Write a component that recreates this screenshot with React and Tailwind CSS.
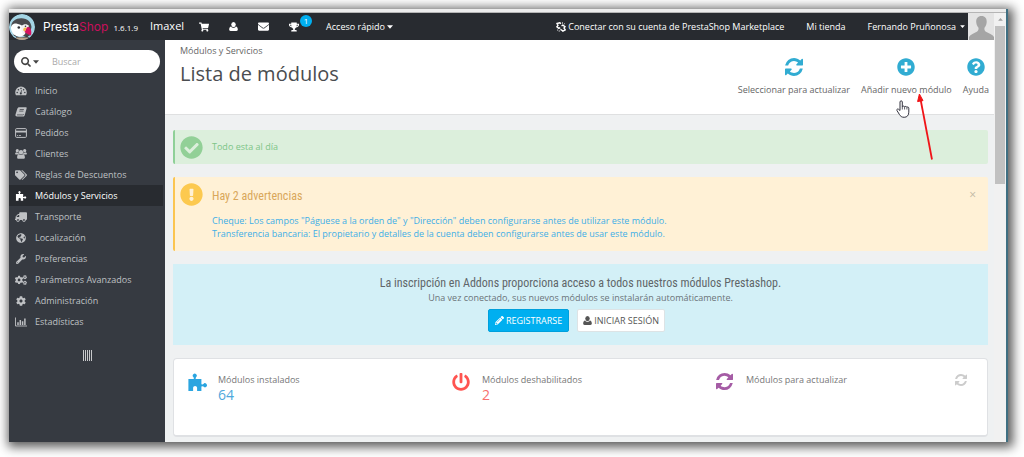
import {
  FaShoppingCart,
  FaEnvelope,
  FaTrophy,
  FaTags,
  FaTruck,
  FaWrench,
  FaCog,
  FaCogs,
  FaPencilAlt,
  FaPlusCircle,
  FaQuestionCircle,
  FaPowerOff,
  FaSearch,
  FaGlobeAmericas,
  FaExclamationCircle,
  FaCheckCircle,
} from "react-icons/fa";

function RefreshIcon({ className }) {
  return (
    <svg viewBox="0 128 1536 1536" fill="currentColor" className={className} aria-hidden="true">
      <path d="M1511 1056q0 5-1 7-64 268-268 434.500t-478 166.500q-146 0-282.500-55t-243.500-157l-129 129q-19 19-45 19t-45-19-19-45v-448q0-26 19-45t45-19h448q26 0 45 19t19 45-19 45l-137 137q71 66 161 102t187 36q134 0 250-65t186-179q11-17 53-117 8-23 30-23h192q13 0 22.500 9.500t9.500 22.500zm25-800v448q0 26-19 45t-45 19h-448q-26 0-45-19t-19-45 19-45l138-138q-148-137-349-137-134 0-250 65t-186 179q-11 17-53 117-8 23-30 23h-199q-13 0-22.500-9.500t-9.500-22.500v-7q65-268 270-434.500t480-166.500q146 0 284 55.500t245 156.500l130-129q19-19 45-19t45 19 19 45z" />
    </svg>
  );
}

function PuzzleIcon({ className }) {
  return (
    <svg viewBox="0 0 19 18" fill="currentColor" className={className} aria-hidden="true">
      <path d="M.4 5.600h4.800c.6 0 .7-.5.600-1L5.400 3.600a2 2 0 1 1 2.700 0l-.4 1c-.1.500 0 1 .6 1h5.100v4.700c0 .6.400.8 1 .6l1-.5a2 2 0 1 1 0 2.700l-1-.4c-.6-.2-1 0-1 .6v4.200H9.100v-3.200c0-1.100-.9-1.900-2-1.900s-2 .8-2 1.900v3.200H.4z" />
    </svg>
  );
}

function CaretIcon({ className }) {
  return (
    <svg viewBox="0 0 8 5" fill="currentColor" className={className} aria-hidden="true">
      <path d="M0 .3h8L4 4.900z" />
    </svg>
  );
}

function UserIcon({ className }) {
  return (
    <svg viewBox="0 0 10 10" fill="currentColor" className={className} aria-hidden="true">
      <ellipse cx="5" cy="2.900" rx="2.500" ry="2.900" />
      <path d="M2.400 5c.7 1.100 1.500 1.600 2.600 1.600S6.900 6.100 7.600 5c1.500.2 2.200 1.600 2.200 3.400 0 1.100-.6 1.600-1.500 1.600H1.700C.8 10 .2 9.500.2 8.400.2 6.600.9 5.200 2.400 5z" />
    </svg>
  );
}

function GaugeIcon({ className }) {
  return (
    <svg viewBox="0 0 12 10" className={className} aria-hidden="true">
      <path d="M6 .6A5.800 5.800 0 0 0 .2 6.400c0 1.100.3 2.100.8 2.900h10c.5-.8.8-1.800.8-2.900A5.800 5.800 0 0 0 6 .6z" fill="currentColor" />
      <g fill="#363a41">
        <circle cx="2.200" cy="6.400" r=".75" />
        <circle cx="3.400" cy="3.700" r=".75" />
        <circle cx="6" cy="2.500" r=".75" />
        <circle cx="8.600" cy="3.700" r=".75" />
        <circle cx="9.800" cy="6.400" r=".75" />
        <circle cx="5.800" cy="7.400" r="1" />
        <path d="m5.500 7 .8-3 .5.100-.5 3.100z" />
      </g>
    </svg>
  );
}

function BookIcon({ className }) {
  return (
    <svg viewBox="0 0 12 10" className={className} aria-hidden="true">
      <path d="M4.200.3h6.600c.7 0 1 .5.800 1.200L9.700 8.300c-.2.800-.8 1.300-1.600 1.300H2C.8 9.600.2 8.700.5 7.600L2.300 1.800C2.600.9 3.300.3 4.200.3z" fill="currentColor" />
      <path d="M4.700 2.500h4.200M4.200 4.100h4.200M2 7.900h5.800c.5 0 .8-.3 1-.8" stroke="#363a41" strokeWidth=".7" fill="none" />
    </svg>
  );
}

function GroupIcon({ className }) {
  return (
    <svg viewBox="0 0 12 10" fill="currentColor" className={className} aria-hidden="true">
      <circle cx="2.300" cy="1.700" r="1.600" />
      <circle cx="9.700" cy="1.700" r="1.600" />
      <circle cx="6" cy="3.300" r="2.200" />
      <path d="M1 3.300c.8.500 1.700.6 2.500.2.100 1 .4 1.500.8 2H1.200C.4 5.500 0 5.100.1 4.400zM11 3.300c-.8.500-1.700.6-2.500.2-.1 1-.4 1.500-.8 2h3.100c.8 0 1.200-.4 1.100-1.100z" />
      <path d="M4 5.200c1.300 1 2.700 1 4 0 1.400.2 1.900 1.500 1.900 3 0 1-.6 1.600-1.500 1.600H3.600c-.9 0-1.500-.6-1.500-1.600 0-1.500.5-2.800 1.900-3z" />
    </svg>
  );
}

function TruckIcon({ className }) {
  return <FaTruck className={`${className} -scale-x-100`} />;
}

function CardIcon({ className }) {
  return (
    <svg viewBox="0 0 12 10" fill="none" stroke="currentColor" className={className} aria-hidden="true">
      <rect x=".6" y=".6" width="10.800" height="8.800" rx="1" strokeWidth="1" />
      <path d="M.6 3.600h10.800" strokeWidth="1.800" />
      <path d="M2 7.500h1.200M4 7.500h2" strokeWidth=".8" />
    </svg>
  );
}

function ChartIcon({ className }) {
  return (
    <svg viewBox="0 0 12 10" fill="none" stroke="currentColor" className={className} aria-hidden="true">
      <path d="M.5 .5v8.500H12" strokeWidth=".9" />
      <path d="M3 8V5.300M5.300 8V3M7.600 8V4.300M9.900 8V1.500" strokeWidth="1.500" />
    </svg>
  );
}

function UnlinkedIcon({ className }) {
  return (
    <svg viewBox="0 0 10 10" fill="none" stroke="currentColor" strokeWidth="1.400" className={className} aria-hidden="true">
      <path d="M5 1.600 3.800.8 1 1.500l1 2 -1.200 1.300 2 1.600 1.400-.8M5.500 4l1.300-.9 2.200 1.500-1 1.400 1.300 1.900-2.400 1.200L5.600 8l-1.200-.6" />
      <path d="M6.500.3v1.400M8.800 1.500l-1 .9M1 8.500l1-.9M3.200 9.700V8.300" strokeWidth=".8" />
    </svg>
  );
}

function PuffinLogo({ className }) {
  return (
    <svg viewBox="0 0 26 26" className={className} aria-hidden="true">
      <defs>
        <clipPath id="puffin-disc">
          <circle cx="13" cy="13" r="13" />
        </clipPath>
      </defs>
      <g clipPath="url(#puffin-disc)">
        <circle cx="13" cy="13" r="13" fill="#a4d5e5" />
        <path d="M2 12.500C2.500 7 7 4 12.500 4.200c6 .2 9.500 3.800 10 8.700L20.500 22H5z" fill="#4a4a4e" />
        <path d="M2 14.500c-.2-3.500 2.600-5.300 6-4.800 2.600.3 4.500 1.700 6 2.300l2.500 6c0 2.500-2.500 4.500-6 4.500-4.500 0-8-3-8.500-8z" fill="#fff" />
        <path d="M12.500 12c2-2.200 5.500-2.500 7.500-.2l-2.500 5.700-3 3c-1.500-2-3-5-2-8.500z" fill="#f3f3f3" />
        <path d="M17 15c1-2.500 3.500-2.700 4.700.3.800 2 .8 4 .3 6.200-2.300-.8-5-2.300-6.500-3.500z" fill="#d6145f" />
        <path d="M14.500 14.500c1-1.200 2.200-1.300 3.200-.7l-1.700 3.700-1.800-1z" fill="#f6b64a" />
        <circle cx="9.800" cy="13.500" r="1.300" fill="#2f3035" />
        <circle cx="16.500" cy="12.300" r=".8" fill="#2f3035" />
        <path d="M6 21.500c4 2.500 8 2.500 12-.3l2 2.300-3 2H8z" fill="#3a3b40" />
        <path d="M7 23.500h12l-1 2.500H8z" fill="#b8a48c" />
      </g>
    </svg>
  );
}

const menu = [
  { label: "Inicio", Icon: GaugeIcon },
  { label: "Catálogo", Icon: BookIcon },
  { label: "Pedidos", Icon: CardIcon },
  { label: "Clientes", Icon: GroupIcon },
  { label: "Reglas de Descuentos", Icon: FaTags },
  { label: "Módulos y Servicios", Icon: PuzzleIcon, active: true },
  { label: "Transporte", Icon: TruckIcon },
  { label: "Localización", Icon: FaGlobeAmericas },
  { label: "Preferencias", Icon: FaWrench },
  { label: "Parámetros Avanzados", Icon: FaCogs },
  { label: "Administración", Icon: FaCog },
  { label: "Estadísticas", Icon: ChartIcon },
];

function TopBar() {
  return (
    <header className="flex h-[27px] items-center bg-[#282b30] text-[9px] text-white">
      <PuffinLogo className="size-[26px] shrink-0" />
      <a href="#inicio" className="ml-2 font-[Inter,sans-serif] text-[12px]">
        Presta<span className="text-[#c8105c]">Shop</span>
      </a>
      <span className="ml-[5px] pt-[2px] text-[8px] font-medium">1.6.1.9</span>
      <a href="#imaxel" className="ml-3 text-[11px]">Imaxel</a>
      <nav className="ml-[15px] flex items-center gap-5">
        <a href="#pedidos" aria-label="Pedidos"><FaShoppingCart className="size-[10px]" /></a>
        <a href="#clientes" aria-label="Clientes"><UserIcon className="size-[9px]" /></a>
        <a href="#mensajes" aria-label="Mensajes"><FaEnvelope className="size-[11px]" /></a>
        <a href="#logros" aria-label="Logros" className="relative">
          <FaTrophy className="size-[10px]" />
          <span className="absolute -top-[7px] left-[11px] flex size-3 items-center justify-center rounded-full bg-[#00aff0] text-[8px]">1</span>
        </a>
      </nav>
      <button type="button" className="ml-[27px] flex items-center gap-[2px]">
        Acceso rápido <CaretIcon className="h-1 w-[6px]" />
      </button>
      <div className="ml-auto flex items-center">
        <a href="#marketplace" className="flex items-center gap-[2px]">
          <UnlinkedIcon className="size-[10px]" /> Conectar con su cuenta de PrestaShop Marketplace
        </a>
        <a href="#tienda" className="ml-[22px]">Mi tienda</a>
        <button type="button" className="ml-[22px] flex items-center gap-1">
          Fernando Pruñonosa <CaretIcon className="h-[3px] w-[5px]" />
        </button>
      </div>
      <svg viewBox="0 0 26 27" className="ml-[3px] h-[27px] w-[26px] bg-[#e4e4e4]" aria-hidden="true">
        <path d="M13.500 3c3.600 0 5.400 2.500 5.200 6-.2 3-1.200 4.600-2.200 5.800-.3 1.700 0 3.200 1.400 4 3.500 1.800 7.100 3 8.100 5.200v3H1v-3c1-2.200 4.500-3.400 7.800-5.200 1.400-.8 2-2.300 1.700-4-1-1.200-2.100-2.800-2.300-5.800-.2-3.500 1.700-6 5.300-6z" fill="#a5a5a5" />
      </svg>
    </header>
  );
}

function Sidebar() {
  return (
    <aside className="w-[156px] shrink-0 bg-[#363a41] pt-[10px]">
      <form className="mx-[5px] flex h-[23px] items-center rounded-full bg-white pl-[7px] text-[#444]">
        <button type="button" aria-label="Tipo de búsqueda" className="flex items-center gap-[2px]">
          <FaSearch className="size-[10px]" />
          <CaretIcon className="h-1 w-[6px]" />
        </button>
        <input aria-label="Buscar" placeholder="Buscar" className="ml-[13px] w-full min-w-0 bg-transparent text-[9px] outline-none placeholder:text-[#aaa]" />
      </form>
      <ul className="mt-[7px]">
        {menu.map(({ label, Icon, active }) => (
          <li key={label}>
            <a
              href="#menu"
              className={
                active
                  ? "mr-[2px] flex h-[21px] items-center bg-[#282b30] pl-[5px] text-[9px] font-medium text-white"
                  : "flex h-[21px] items-center pl-[5px] text-[9px] text-[#bfc1c4]"
              }
            >
              <span className="flex w-[13px] justify-center">
                <Icon className="h-[10px] w-3" />
              </span>
              <span className="ml-2">{label}</span>
            </a>
          </li>
        ))}
      </ul>
      <button type="button" aria-label="Contraer menú" className="mx-auto mt-[18px] flex gap-px">
        {[0, 1, 2, 3, 4].map((n) => (
          <span key={n} className="h-[11px] w-px bg-[#c8c9cb]" />
        ))}
      </button>
    </aside>
  );
}

function PageHeader() {
  return (
    <div className="relative flex h-[75px] justify-between border-b border-[#dfe0e1] bg-white pr-[5px] pl-[15px]">
      <div className="pt-1 text-[9px] text-[#666]">
        <p>Módulos y Servicios</p>
        <h1 className="mt-[3px] text-[20px] leading-[26px] text-[#4a4d50]">Lista de módulos</h1>
      </div>
      <div className="flex items-start gap-[11px] pt-[18px] text-[9px] text-[#666]">
        <button type="button" className="flex flex-col items-center gap-[7px]">
          <RefreshIcon className="size-[18px] text-[#31acd2]" />
          Seleccionar para actualizar
        </button>
        <button type="button" className="flex flex-col items-center gap-[7px]">
          <FaPlusCircle className="size-[18px] text-[#31acd2]" />
          Añadir nuevo módulo
        </button>
        <button type="button" className="flex flex-col items-center gap-[7px]">
          <FaQuestionCircle className="size-[18px] text-[#31acd2]" />
          Ayuda
        </button>
      </div>
      <svg viewBox="0 0 14 18" className="absolute top-[60px] right-[84px] h-[18px] w-[14px]" aria-hidden="true">
        <path d="M4 10.500V2c0-1.600 2.300-1.600 2.300 0v4.800c.2-1 2.100-1 2.300.2.300-.9 2.100-.8 2.300.4.300-.7 1.900-.6 1.900.8v4c0 3-1.700 5.100-4.600 5.100-2.500 0-3.700-1-4.900-3L1 10.600c-.8-1.300.9-2.200 1.800-1.100z" fill="#fff" stroke="#33333f" strokeWidth="1" strokeLinejoin="round" />
        <path d="M6.300 6.500v3M8.600 7v2.500M10.900 7.400v2.100" fill="none" stroke="#33333f" strokeWidth=".8" />
      </svg>
      <svg viewBox="0 0 18 68" className="absolute top-[54px] right-[59px] h-[68px] w-[18px]" aria-hidden="true">
        <path d="M15 65.500 3.500 5" fill="none" stroke="#f01418" strokeWidth="1.800" />
        <path d="M2.400 0 6 6.600.6 7.600z" fill="#f01418" stroke="#f01418" />
      </svg>
    </div>
  );
}

const stats = [
  { label: "Módulos instalados", value: "64", Icon: PuzzleIcon, icon: "size-[19px] text-[#2ba5e0]", number: "text-[#4fa8dc]" },
  { label: "Módulos deshabilitados", value: "2", Icon: FaPowerOff, icon: "size-[18px] text-[#ff5450]", number: "text-[#f8706c]" },
  { label: "Módulos para actualizar", value: "", Icon: RefreshIcon, icon: "size-[17px] text-[#a55ca5]", number: "" },
];

const condensed = "font-['Ubuntu_Condensed','Roboto_Condensed','Liberation_Sans_Narrow',sans-serif]";

function Content() {
  return (
    <main className="flex min-w-0 flex-1 flex-col bg-[#eff1f2]">
      <PageHeader />
      <div className="flex flex-col gap-[13px] pt-[15px] pr-[6px] pb-[5px] pl-2 text-[9px]">
        <div className="flex h-[34px] items-center gap-[9px] rounded-[2px] border-l-2 border-[#8fd098] bg-[#dcefdc] pl-[5px] text-[#7cc587]">
          <FaCheckCircle className="size-[23px] text-[#92d097]" />
          Todo esta al día
        </div>

        <div className="flex h-[74px] items-start rounded-[2px] border-l-2 border-[#fbc550] bg-[#fff1d6] pt-[6px] pr-3 pl-[5px]">
          <FaExclamationCircle className="size-[23px] shrink-0 text-[#fcc94f]" />
          <div className="ml-[9px] flex-1">
            <h2 className={`${condensed} pt-[4px] text-[12px] leading-[18px] text-[#d9a75a]`}>Hay 2 advertencias</h2>
            <p className="mt-[9px] leading-[13px] text-[#40aee6]">
              <a href="#cheque" className="block">Cheque: Los campos "Páguese a la orden de" y "Dirección" deben configurarse antes de utilizar este módulo.</a>
              <a href="#transferencia" className="block">Transferencia bancaria: El propietario y detalles de la cuenta deben configurarse antes de usar este módulo.</a>
            </p>
          </div>
          <button type="button" aria-label="Cerrar" className="pt-[5px] text-[12px] leading-[14px] text-[#c2b8a4]">×</button>
        </div>

        <section className="flex h-[81px] flex-col items-center bg-[#d3f0f7] pt-[11px] text-[#6b7377]">
          <h2 className={`${condensed} text-[12px] leading-[17px] text-[#5f6669]`}>
            La inscripción en Addons proporciona acceso a todos nuestros módulos Prestashop.
          </h2>
          <p className="leading-[11px]">Una vez conectado, sus nuevos módulos se instalarán automáticamente.</p>
          <div className="mt-[6px] flex gap-2 pr-2">
            <button type="button" className="flex h-[23px] items-center gap-[2px] rounded-[2px] border border-[#00a0dc] bg-[#00aff0] px-[6px] text-white">
              <FaPencilAlt className="size-[9px]" /> REGISTRARSE
            </button>
            <button type="button" className="flex h-[23px] items-center gap-[2px] rounded-[2px] border border-[#dde3e5] bg-white px-[5px] text-[#555]">
              <UserIcon className="size-[9px]" /> INICIAR SESIÓN
            </button>
          </div>
        </section>

        <section className="relative grid h-[79px] grid-cols-3 rounded-[4px] border border-b-2 border-[#dfe1e4] bg-white pt-[14px] pr-[7px] pl-[14px]">
          {stats.map(({ label, value, Icon, icon, number }) => (
            <div key={label} className="flex items-start">
              <span className="flex w-[30px]">
                <Icon className={icon} />
              </span>
              <div className="text-[#777]">
                <p className="leading-[13px]">{label}</p>
                <p className={`text-[14px] leading-[18px] ${number}`}>{value}</p>
              </div>
            </div>
          ))}
          <button type="button" aria-label="Actualizar" className="absolute top-[15px] right-5 text-[#ccc]">
            <RefreshIcon className="size-3" />
          </button>
        </section>
      </div>
    </main>
  );
}

export default function App() {
  return (
    <div className="min-h-screen bg-white pt-[9px] pr-4 pb-[15px] pl-[9px] font-['Open_Sans','Noto_Sans',sans-serif]">
      <div className="border-r-2 border-[#3f6f82] bg-[#eee] shadow-[2px_2px_10px_3px_rgba(0,0,0,0.65)]">
        <div className="h-1 border-b border-[#b5b5b5] bg-[#ececec]" />
        <div className="flex">
          <div className="min-w-0 flex-1">
            <TopBar />
            <div className="flex">
              <Sidebar />
              <Content />
            </div>
          </div>
          <div className="flex w-3 flex-col items-center bg-[#f1f1f1]">
            <CaretIcon className="mt-[5px] h-[3px] w-[5px] rotate-180 text-[#a0a0a0]" />
            <div className="mt-[5px] h-[158px] w-[10px] bg-[#c1c1c1]" />
          </div>
        </div>
      </div>
    </div>
  );
}
